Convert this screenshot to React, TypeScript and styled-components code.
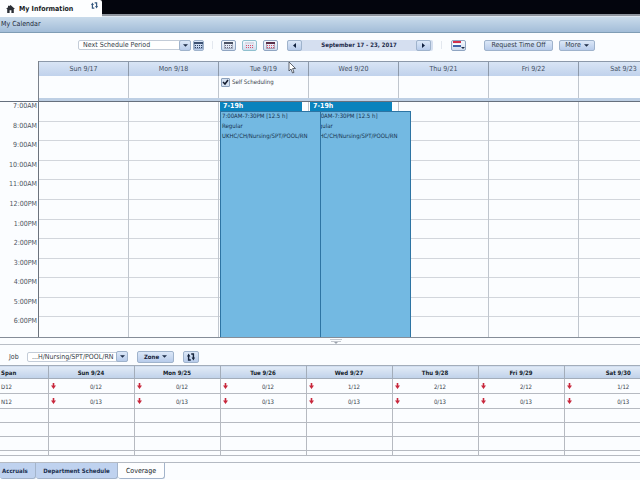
import React from "react";
import styled, { createGlobalStyle, css } from "styled-components";

const GlobalStyle = createGlobalStyle`
  * { box-sizing: border-box; }
  body {
    margin: 0;
    background: #fbfdff;
    color: #333c48;
    font: 7px/10px "DejaVu Sans Condensed", "DejaVu Sans", sans-serif;
  }
  button, select, input { font: inherit; color: inherit; margin: 0; }
`;

const Page = styled.div`
  display: flex;
  flex-direction: column;
  min-height: 100vh;
  overflow: hidden;
  position: relative;
`;

/* ---------- window header ---------- */

const TopBar = styled.header`
  display: flex;
  height: 17px;
  flex: none;
  background: linear-gradient(#03050d 0 14px, #8e949d 14px 16px, #dfe7f0 16px);
`;

const WindowTab = styled.div`
  display: flex;
  align-items: center;
  gap: 4px;
  width: 102px;
  padding: 0 4px 0 6px;
  background: #fdfeff;
  border-top-right-radius: 2px;
  color: #161b24;
  font-weight: bold;
  svg:last-child { margin: -6px 0 0 auto; }
`;

const TitleBar = styled.h1`
  flex: none;
  height: 16px;
  margin: 0;
  padding: 0 1px;
  border-bottom: 1px solid #7f9db5;
  background: linear-gradient(#c9dbeb, #a3bdd8);
  color: #1c2838;
  font-size: 7px;
  font-weight: normal;
  line-height: 15px;
`;

/* ---------- controls ---------- */

const bevel = css`
  border: 1px solid #9fb3cc;
  border-radius: 2px;
  background: linear-gradient(#dce8f8, #b7cbea);
`;

const Button = styled.button<{ $width: number }>`
  ${bevel}
  display: flex;
  flex: none;
  align-items: center;
  justify-content: center;
  gap: 3px;
  width: ${(p) => p.$width}px;
  height: 11px;
  padding: 0;
  line-height: 9px;
  white-space: nowrap;
`;

const IconButton = styled(Button)<{ $tint?: string }>`
  border-color: ${(p) => p.$tint ?? "#8fa5c2"};
  background: linear-gradient(#f5f9fe, #cfdcee);
`;

const BoldButton = styled(Button)`
  height: 12px;
  color: #16243c;
  font-size: 6px;
  font-weight: bold;
`;

const SelectBox = styled.div<{ $width: number }>`
  display: flex;
  flex: none;
  align-items: center;
  position: relative;
  width: ${(p) => p.$width}px;
  height: 11px;
`;

const Select = styled.select`
  appearance: none;
  width: 100%;
  height: 10px;
  padding: 0 12px 0 4px;
  border: 1px solid #c3ccd8;
  border-radius: 2px;
  background: #fff;
  line-height: 8px;
`;

const SelectArrow = styled.span`
  ${bevel}
  display: flex;
  position: absolute;
  top: 0;
  right: 0;
  width: 12px;
  height: 11px;
  align-items: center;
  justify-content: center;
  pointer-events: none;
`;

const Caret = ({ size = 5 }: { size?: number }) => (
  <svg width={size} height="3" viewBox="0 0 6 3" aria-hidden="true">
    <path d="M0 0h6L3 3z" fill="#1d2c47" />
  </svg>
);

const Toolbar = styled.div`
  display: flex;
  flex: none;
  align-items: center;
  height: 28px;
  padding: 0 0 4px 78px;
`;

const ToolGroup = styled.div<{ $left?: number; $gap?: number }>`
  display: flex;
  flex: none;
  align-items: center;
  gap: ${(p) => p.$gap ?? 6}px;
  margin-left: ${(p) => p.$left ?? 0}px;
`;

const Divider = styled.span<{ $before?: number; $after?: number }>`
  flex: none;
  width: 1px;
  height: 8px;
  margin: 0 ${(p) => p.$after ?? 8}px 0 8px;
  background: #e3e8ef;
`;

const DateRange = styled.div`
  display: flex;
  flex: none;
  align-items: center;
  justify-content: space-between;
  width: 146px;
  height: 11px;
  padding-right: 2px;
  border-radius: 2px;
  background: #d5dff0;
  color: #1d2a4a;
  font-size: 6px;
  font-weight: bold;
`;

/* ---------- weekly calendar ---------- */

const Calendar = styled.main`
  display: grid;
  flex: 1;
  grid-template-columns: 39px repeat(7, minmax(90px, 1fr));
  grid-template-rows: 15px 22px 4px minmax(234px, 1fr);
  border-bottom: 1px solid #858d98;
`;

const DayHead = styled.div`
  border: solid #8c99aa;
  border-width: 1px 1px 0 0;
  background: linear-gradient(#d9e5f5, #c0d2ec);
  color: #434f62;
  line-height: 14px;
  text-align: center;
`;

const Corner = styled.div`
  border-right: 1px solid #7b828c;
`;

const AllDay = styled.div`
  padding: 1px 2px;
  border-right: 1px solid #c0c6ce;
`;

const CheckLabel = styled.label`
  display: flex;
  align-items: center;
  gap: 2px;
  font-size: 6px;
`;

const CheckBox = styled.input`
  appearance: none;
  width: 9px;
  height: 9px;
  border: 1px solid #8ba0bb;
  border-radius: 1px;
  background: #d5e1f1
    url("data:image/svg+xml,%3Csvg xmlns='http://www.w3.org/2000/svg' viewBox='0 0 7 7'%3E%3Cpath d='M1 3l2 2 3-4' fill='none' stroke='%23121a2c' stroke-width='1.5'/%3E%3C/svg%3E");
`;

const Strip = styled.div<{ $plain?: boolean }>`
  border-bottom: 1px solid #66707e;
  background: ${(p) => (p.$plain ? "none" : "#bdcfe4")};
  ${(p) => p.$plain && "border-right: 1px solid #7b828c;"}
`;

const Hours = styled.div`
  display: grid;
  grid-template-rows: repeat(12, 1fr);
  padding-right: 1px;
  border-right: 1px solid #6c737d;
  color: #4b535e;
  line-height: 9px;
  text-align: right;
`;

const DayColumn = styled.div`
  display: grid;
  grid-template-rows: repeat(12, 1fr);
  position: relative;
  border-right: 1px solid #c0c6ce;
`;

const Slot = styled.div`
  border-bottom: 1px solid #d2d6dc;
  &:last-of-type { border-bottom: 0; }
`;

const Shift = styled.article<{ $layer: number }>`
  display: flex;
  flex-direction: column;
  position: absolute;
  top: 0;
  bottom: 0;
  left: 1px;
  z-index: ${(p) => p.$layer};
  width: 101px;
  color: #17324e;
  font-size: 6px;
  white-space: nowrap;
`;

const ShiftTitle = styled.h2`
  width: 82px;
  height: 9px;
  margin: 0;
  padding-left: 3px;
  background: #0a83bd;
  color: #fff;
  font-size: 7px;
  line-height: 9px;
`;

const ShiftBody = styled.div`
  flex: 1;
  padding-left: 1px;
  border: solid #2d74a3;
  border-width: 1px 1px 0;
  background: #73b9e2;
`;

const ShiftLine = styled.p`
  height: 10px;
  margin: 0;
  line-height: 8px;
`;

const Splitter = styled.div`
  display: flex;
  flex: none;
  justify-content: center;
  height: 7px;
  padding: 1px 0 0 32px;
  border-bottom: 1px solid #b9bec6;
`;

/* ---------- coverage ---------- */

const CoverageBar = styled.div`
  display: flex;
  flex: none;
  align-items: center;
  height: 20px;
  padding: 3px 0 0 9px;
`;

const JobLabel = styled.label`
  width: 18px;
`;

const TableWrap = styled.section`
  flex: none;
  overflow: hidden;
`;

const Table = styled.table`
  width: 100%;
  min-width: 673px;
  border-collapse: collapse;
  table-layout: fixed;
  font-size: 6px;
  line-height: 9px;
`;

const Th = styled.th<{ $width?: number }>`
  ${(p) => p.$width && `width: ${p.$width}px;`}
  height: 13px;
  padding: 0;
  border: solid #a3adba;
  border-width: 1px 1px 1px 0;
  background: linear-gradient(#e2ebf7, #bfd1e9);
  color: #141c2a;
  text-align: center;
  &:first-child { padding-left: 1px; text-align: left; }
`;

const Td = styled.td<{ $height?: number }>`
  height: ${(p) => p.$height ?? 15}px;
  padding: 0;
  border: solid #b6bac1;
  border-width: 0 1px 1px 0;
  &:first-child { padding-left: 1px; }
`;

const Count = styled.div`
  display: grid;
  grid-template-columns: 8px 1fr 0;
  align-items: center;
  padding-left: 2px;
  text-align: center;
`;

const Filler = styled.div`
  flex: none;
  height: 6px;
`;

const Tabs = styled.nav`
  display: flex;
  flex: none;
  height: 18px;
  border-top: 1px solid #b4bac3;
`;

const Tab = styled.button<{ $width: number; $active?: boolean }>`
  width: ${(p) => p.$width}px;
  height: 16px;
  padding: 0;
  border: solid #a3b4cb;
  border-width: 0 1px 1px 0;
  border-radius: 0 0 3px 3px;
  background: ${(p) => (p.$active ? "#fdfeff" : "#bfd2ef")};
  color: ${(p) => (p.$active ? "#141a24" : "#1a2f4e")};
  font-size: ${(p) => (p.$active ? 7 : 6)}px;
  font-weight: ${(p) => (p.$active ? "normal" : "bold")};
  white-space: nowrap;
  &:first-child { padding-left: 2px; text-align: left; }
`;

const Pointer = styled.svg`
  position: absolute;
  top: 61px;
  left: 288px;
  z-index: 9;
`;

/* ---------- drawings ---------- */

const HomeIcon = () => (
  <svg width="9" height="8" viewBox="0 0 9 8" aria-hidden="true">
    <path d="M4.5 0L9 4H7.8v4H5.4V5.2H3.6V8H1.2V4H0L2 2.2V.7h1.2v.5z" fill="#2b2f36" />
  </svg>
);

const RefreshIcon = ({ size = 8, color = "#16243c" }: { size?: number; color?: string }) => (
  <svg width={size} height={size} viewBox="0 0 8 8" aria-hidden="true">
    <path d="M3.8 7H1.6V2.6M4.2 1h2.2v4.4" fill="none" stroke={color} strokeWidth="1.4" />
    <path d="M0 3.4L1.6.6l1.8 2.8zM4.6 4.6L6.4 7.4 8 4.6z" fill={color} />
  </svg>
);

const CalendarIcon = ({ head, dots }: { head: string; dots: string }) => (
  <svg width="9" height="7" viewBox="0 0 9 7" aria-hidden="true">
    <path d="M0 0h9v2H0z" fill={head} />
    <path d="M1 3h1v1H1zM3 3h1v1H3zM5 3h1v1H5zM7 3h1v1H7zM1 5h1v1H1zM3 5h1v1H3zM5 5h1v1H5zM7 5h1v1H7z" fill={dots} />
    <path d="M.5 2v4.5h8V2" fill="none" stroke={head} strokeOpacity=".35" />
  </svg>
);

const FlagIcon = () => (
  <svg width="12" height="8" viewBox="0 0 12 8" aria-hidden="true">
    <path d="M0 0h8v2H0z" fill="#d32f4b" />
    <path d="M0 3h8v1H0z" fill="#fff" />
    <path d="M0 4h8v2H0z" fill="#4164a8" />
    <path d="M8 6h4l-2 2z" fill="#1d2c47" />
  </svg>
);

const Triangle = ({ back }: { back?: boolean }) => (
  <svg width="3" height="5" viewBox="0 0 3 5" aria-hidden="true">
    <path d={back ? "M3 0v5L0 2.5z" : "M0 0v5l3-2.5z"} fill="#10203e" />
  </svg>
);

const DownArrow = () => (
  <svg width="5" height="6" viewBox="0 0 5 6" role="img" aria-label="Below target">
    <path d="M1.7 0h1.6v2.6H5L2.5 6 0 2.6h1.7z" fill="#c8283c" />
  </svg>
);

/* ---------- data ---------- */

const days = ["Sun 9/17", "Mon 9/18", "Tue 9/19", "Wed 9/20", "Thu 9/21", "Fri 9/22", "Sat 9/23"];
const hours = [
  "7:00AM", "8:00AM", "9:00AM", "10:00AM", "11:00AM", "12:00PM",
  "1:00PM", "2:00PM", "3:00PM", "4:00PM", "5:00PM", "6:00PM",
];
const shiftDays = ["Tue 9/19", "Wed 9/20"];
const coverageDays = ["Sun 9/24", "Mon 9/25", "Tue 9/26", "Wed 9/27", "Thu 9/28", "Fri 9/29", "Sat 9/30"];
const spans = [
  { name: "D12", counts: ["0/12", "0/12", "0/12", "1/12", "2/12", "2/12", "1/12"] },
  { name: "N12", counts: ["0/13", "0/13", "0/13", "0/13", "0/13", "0/13", "0/13"] },
];
const emptyRowHeights = [14, 14, 14, 5];

export default function App() {
  return (
    <>
      <GlobalStyle />
      <Page>
        <TopBar>
          <WindowTab>
            <HomeIcon />
            My Information
            <RefreshIcon size={7} color="#35587f" />
          </WindowTab>
        </TopBar>
        <TitleBar>My Calendar</TitleBar>

        <Toolbar>
          <ToolGroup $gap={2}>
            <SelectBox $width={113}>
              <Select aria-label="Time period">
                <option>Next Schedule Period</option>
              </Select>
              <SelectArrow><Caret /></SelectArrow>
            </SelectBox>
            <Button $width={11} aria-label="Pick dates">
              <CalendarIcon head="#3d5273" dots="#2c3f60" />
            </Button>
          </ToolGroup>
          <Divider />
          <ToolGroup>
            <IconButton $width={15} aria-label="Day view">
              <CalendarIcon head="#4b5264" dots="#6f6a80" />
            </IconButton>
            <IconButton $width={15} $tint="#8fc0cf" aria-label="Week view">
              <CalendarIcon head="#d5dae6" dots="#d9506c" />
            </IconButton>
            <IconButton $width={15} aria-label="Month view">
              <CalendarIcon head="#5a2f49" dots="#d9506c" />
            </IconButton>
          </ToolGroup>
          <ToolGroup $left={9}>
            <DateRange>
              <Button $width={15} aria-label="Previous week"><Triangle back /></Button>
              September 17 - 23, 2017
              <Button $width={15} aria-label="Next week"><Triangle /></Button>
            </DateRange>
          </ToolGroup>
          <Divider $after={9} />
          <IconButton $width={15} aria-label="Visibility filter"><FlagIcon /></IconButton>
          <ToolGroup $left={18}>
            <Button $width={69}>Request Time Off</Button>
            <Button $width={36}>More <Caret /></Button>
          </ToolGroup>
        </Toolbar>

        <Calendar>
          <Corner />
          {days.map((day) => <DayHead key={day}>{day}</DayHead>)}
          <Corner />
          {days.map((day) => (
            <AllDay key={day}>
              {day === "Tue 9/19" && (
                <CheckLabel>
                  <CheckBox type="checkbox" defaultChecked />
                  Self Scheduling
                </CheckLabel>
              )}
            </AllDay>
          ))}
          <Strip $plain />
          {days.map((day) => <Strip key={day} />)}
          <Hours>
            {hours.map((hour) => <span key={hour}>{hour}</span>)}
          </Hours>
          {days.map((day) => (
            <DayColumn key={day}>
              {hours.map((hour) => <Slot key={hour} />)}
              {shiftDays.includes(day) && (
                <Shift $layer={shiftDays.length - shiftDays.indexOf(day)}>
                  <ShiftTitle>7-19h</ShiftTitle>
                  <ShiftBody>
                    <ShiftLine>7:00AM-7:30PM [12.5 h]</ShiftLine>
                    <ShiftLine>Regular</ShiftLine>
                    <ShiftLine>UKHC/CH/Nursing/SPT/POOL/RN</ShiftLine>
                  </ShiftBody>
                </Shift>
              )}
            </DayColumn>
          ))}
        </Calendar>

        <Splitter>
          <svg width="12" height="5" viewBox="0 0 12 5" aria-hidden="true">
            <path d="M0 .5h12M1 2.5h10" stroke="#c5c9d0" />
            <path d="M4 3h4L6 5z" fill="#9aa1ab" />
          </svg>
        </Splitter>

        <CoverageBar>
          <JobLabel htmlFor="job">Job</JobLabel>
          <SelectBox $width={101}>
            <Select id="job">
              <option>...H/Nursing/SPT/POOL/RN</option>
            </Select>
            <SelectArrow><Caret /></SelectArrow>
          </SelectBox>
          <ToolGroup $left={9} $gap={9}>
            <BoldButton $width={37}>Zone <Caret /></BoldButton>
            <BoldButton $width={16} aria-label="Refresh"><RefreshIcon /></BoldButton>
          </ToolGroup>
        </CoverageBar>

        <TableWrap>
          <Table>
            <thead>
              <tr>
                <Th $width={48}>Span</Th>
                {coverageDays.map((day, i) => (
                  <Th key={day} $width={i < 6 ? 86 : undefined}>{day}</Th>
                ))}
              </tr>
            </thead>
            <tbody>
              {spans.map((span) => (
                <tr key={span.name}>
                  <Td>{span.name}</Td>
                  {span.counts.map((count, i) => (
                    <Td key={coverageDays[i]}>
                      <Count><DownArrow />{count}</Count>
                    </Td>
                  ))}
                </tr>
              ))}
              {emptyRowHeights.map((height, row) => (
                <tr key={row}>
                  <Td $height={height} />
                  {coverageDays.map((day) => <Td key={day} $height={height} />)}
                </tr>
              ))}
            </tbody>
          </Table>
        </TableWrap>
        <Filler />

        <Tabs>
          <Tab $width={36}>Accruals</Tab>
          <Tab $width={82}>Department Schedule</Tab>
          <Tab $width={47} $active>Coverage</Tab>
        </Tabs>

        <Pointer width="8" height="13" viewBox="0 0 8 13" aria-hidden="true">
          <path d="M1 1v9l2-2 1.5 4 1.5-.6L4.6 7.5H7.5z" fill="#fff" stroke="#3c424c" strokeWidth=".8" />
        </Pointer>
      </Page>
    </>
  );
}
